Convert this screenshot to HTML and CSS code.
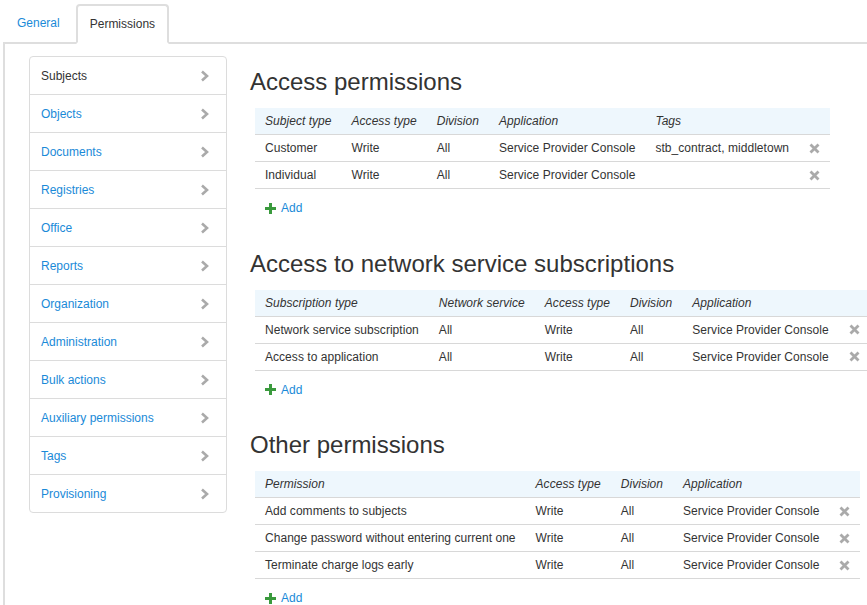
FILE: index.html
```html
<!DOCTYPE html>
<html lang="en">
<head>
    <meta charset="UTF-8">
    <meta name="viewport" content="width=device-width, initial-scale=1.0">
    <title>Permissions</title>
    <link rel="stylesheet" href="styles.css">
</head>
<body>
    <ul class="nav-tabs">
        <li><a href="#">General</a></li>
        <li class="active"><a href="#">Permissions</a></li>
    </ul>

    <div class="tab-panel">
        <div class="side-list">
            <a class="side-item current" href="#">Subjects <span class="chev"></span></a>
            <a class="side-item" href="#">Objects <span class="chev"></span></a>
            <a class="side-item" href="#">Documents <span class="chev"></span></a>
            <a class="side-item" href="#">Registries <span class="chev"></span></a>
            <a class="side-item" href="#">Office <span class="chev"></span></a>
            <a class="side-item" href="#">Reports <span class="chev"></span></a>
            <a class="side-item" href="#">Organization <span class="chev"></span></a>
            <a class="side-item" href="#">Administration <span class="chev"></span></a>
            <a class="side-item" href="#">Bulk actions <span class="chev"></span></a>
            <a class="side-item" href="#">Auxiliary permissions <span class="chev"></span></a>
            <a class="side-item" href="#">Tags <span class="chev"></span></a>
            <a class="side-item" href="#">Provisioning <span class="chev"></span></a>
        </div>

        <div class="main">
            <div class="section">
                <h2>Access permissions</h2>
                <table class="perm-table">
                    <thead>
                        <tr><th>Subject type</th><th>Access type</th><th>Division</th><th>Application</th><th>Tags</th><th></th></tr>
                    </thead>
                    <tbody>
                        <tr><td>Customer</td><td>Write</td><td>All</td><td>Service Provider Console</td><td>stb_contract, middletown</td><td class="rm"><span class="x"></span></td></tr>
                        <tr><td>Individual</td><td>Write</td><td>All</td><td>Service Provider Console</td><td></td><td class="rm"><span class="x"></span></td></tr>
                    </tbody>
                </table>
                <a class="add-link" href="#"><span class="plus"></span>Add</a>
            </div>

            <div class="section">
                <h2>Access to network service subscriptions</h2>
                <table class="perm-table">
                    <thead>
                        <tr><th>Subscription type</th><th>Network service</th><th>Access type</th><th>Division</th><th>Application</th><th></th></tr>
                    </thead>
                    <tbody>
                        <tr><td>Network service subscription</td><td>All</td><td>Write</td><td>All</td><td>Service Provider Console</td><td class="rm"><span class="x"></span></td></tr>
                        <tr><td>Access to application</td><td>All</td><td>Write</td><td>All</td><td>Service Provider Console</td><td class="rm"><span class="x"></span></td></tr>
                    </tbody>
                </table>
                <a class="add-link" href="#"><span class="plus"></span>Add</a>
            </div>

            <div class="section">
                <h2>Other permissions</h2>
                <table class="perm-table">
                    <thead>
                        <tr><th>Permission</th><th>Access type</th><th>Division</th><th>Application</th><th></th></tr>
                    </thead>
                    <tbody>
                        <tr><td>Add comments to subjects</td><td>Write</td><td>All</td><td>Service Provider Console</td><td class="rm"><span class="x"></span></td></tr>
                        <tr><td>Change password without entering current one</td><td>Write</td><td>All</td><td>Service Provider Console</td><td class="rm"><span class="x"></span></td></tr>
                        <tr><td>Terminate charge logs early</td><td>Write</td><td>All</td><td>Service Provider Console</td><td class="rm"><span class="x"></span></td></tr>
                    </tbody>
                </table>
                <a class="add-link" href="#"><span class="plus"></span>Add</a>
            </div>
        </div>
    </div>
</body>
</html>
```
FILE: styles.css
```css
html {
    overflow: hidden;
}
body {
    font-family: "Liberation Sans", Arial, sans-serif;
    font-size: 12px;
    line-height: 16px;
    color: #333;
    margin: 0;
    background-color: white;
}
a {
    color: #1a8ad8;
    text-decoration: none;
}

/* tabs */
.nav-tabs {
    list-style: none;
    margin: 0 0 0 3px;
    padding: 4px 0 0;
    display: flex;
}
.nav-tabs li {
    margin-right: 2px;
    margin-bottom: -2px;
}
.nav-tabs a {
    display: block;
    padding: 10px 13px 11px;
    border: 1px solid transparent;
    border-bottom: none;
    border-radius: 4px 4px 0 0;
}
.nav-tabs .active a {
    color: #333;
    background-color: white;
    border: 2px solid #dedede;
    border-bottom: 2px solid white;
    padding: 10px 12px 10px;
    position: relative;
}
.tab-panel {
    margin-left: 3px;
    border-top: 2px solid #dedede;
    border-left: 2px solid #dedede;
    padding: 12px 0 0 24px;
    display: flex;
    align-items: flex-start;
    gap: 23px;
}

/* left list */
.side-list {
    width: 196px;
    flex-shrink: 0;
    border: 1px solid #dcdcdc;
    border-radius: 4px;
}
.side-item {
    display: flex;
    justify-content: space-between;
    align-items: center;
    height: 37px;
    padding: 0 17px 0 11px;
    border-top: 1px solid #dcdcdc;
}
.side-item:first-child {
    border-top: none;
}
.side-item.current {
    color: #333;
}
.chev {
    width: 9px;
    height: 12px;
    background: url("data:image/svg+xml,%3Csvg xmlns='http://www.w3.org/2000/svg' width='9' height='12'%3E%3Cpolyline points='2,1.5 7,6 2,10.5' fill='none' stroke='%23aaa' stroke-width='2.6'/%3E%3C/svg%3E") no-repeat;
}

/* main */
.main {
    flex: 1;
    min-width: 0;
    padding-top: 13px;
}
.section {
    margin-bottom: 33px;
}
.main h2 {
    font-size: 24px;
    font-weight: normal;
    line-height: 26px;
    color: #333;
    margin: 0 0 13px;
}
.perm-table {
    border-collapse: collapse;
    margin-left: 5px;
    white-space: nowrap;
    letter-spacing: 0.04px;
}
.perm-table th {
    font-style: italic;
    font-weight: normal;
    text-align: left;
    background-color: #eef7fd;
    padding: 5px 10px 5px;
    border-bottom: 1px solid #d8d8d8;
}
.perm-table td {
    padding: 5px 10px;
    border-bottom: 1px solid #d8d8d8;
}
.x {
    display: block;
    width: 11px;
    height: 11px;
    background: url("data:image/svg+xml,%3Csvg xmlns='http://www.w3.org/2000/svg' width='11' height='11'%3E%3Cpath d='M1.5,1.5 L9.5,9.5 M9.5,1.5 L1.5,9.5' stroke='%23aaa' stroke-width='2.8'/%3E%3C/svg%3E") no-repeat;
}
.add-link {
    display: inline-flex;
    align-items: center;
    margin: 11px 0 0 15px;
}
.plus {
    width: 11px;
    height: 11px;
    margin-right: 5px;
    background: url("data:image/svg+xml,%3Csvg xmlns='http://www.w3.org/2000/svg' width='11' height='11'%3E%3Cpath d='M5.5,0 V11 M0,5.5 H11' stroke='%233a9a3d' stroke-width='3'/%3E%3C/svg%3E") no-repeat;
}
```
